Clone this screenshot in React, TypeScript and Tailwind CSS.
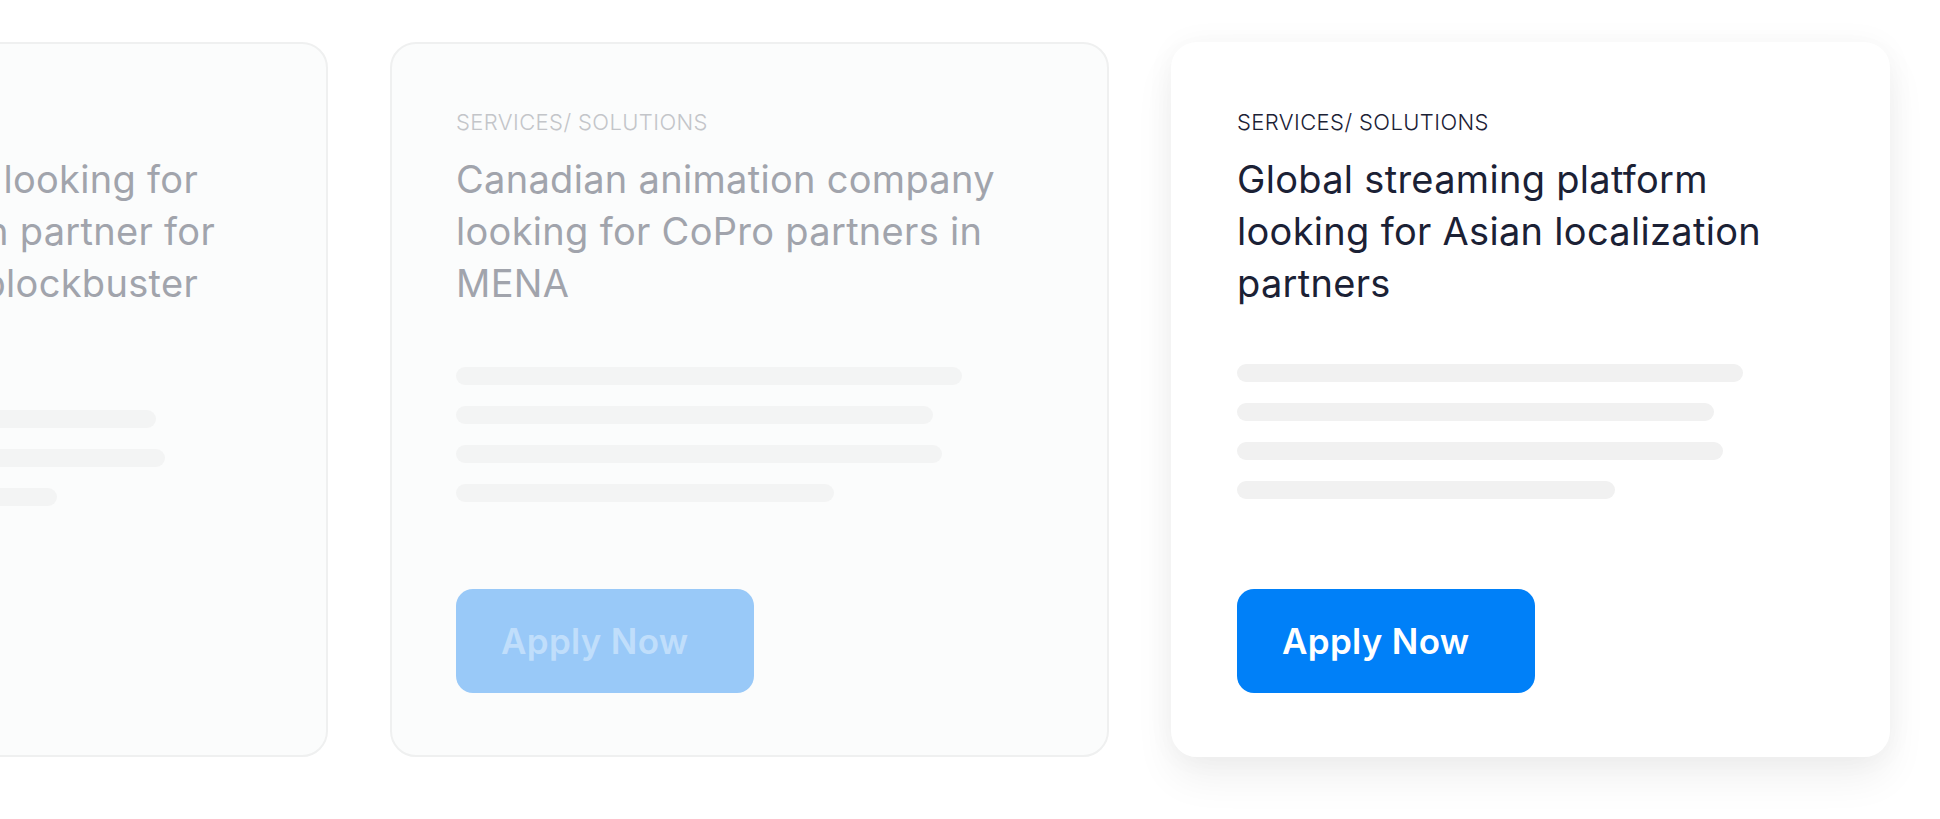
import React from 'react';

type CardProps = {
  title: React.ReactNode;
  bars: number[];
  active?: boolean;
  barsTop?: string;
};

function OpportunityCard({ title, bars, active = false, barsTop = 'mt-[55px]' }: CardProps) {
  return (
    <div
      className={`flex h-[715px] w-[719px] shrink-0 flex-col rounded-[26px] border-2 px-[64px] pt-[62px] pb-[62px] ${
        active
          ? 'border-white bg-white shadow-[0_22px_40px_rgba(0,0,0,0.06),0_0_30px_rgba(0,0,0,0.04)]'
          : 'border-[#eff0f0] bg-[#fbfcfc]'
      }`}
    >
      <div
        className={`text-[22px] leading-[32px] font-light tracking-[0.4px] whitespace-nowrap ${
          active ? 'text-[#1b2135]' : 'text-[#c3c5c9]'
        }`}
      >
        SERVICES/ SOLUTIONS
      </div>
      <h3
        className={`mt-[15px] text-[38px] leading-[52px] font-normal tracking-[0.3px] whitespace-nowrap ${
          active ? 'text-[#1b2135]' : 'text-[#a1a4ac]'
        }`}
      >
        {title}
      </h3>

      {/* skeleton lines */}
      <div className={`${barsTop} flex flex-col gap-[21px]`}>
        {bars.map((w, i) => (
          <div
            key={i}
            className={`h-[18px] rounded-full ${active ? 'bg-[#f1f1f1]' : 'bg-[#f3f4f4]'}`}
            style={{ width: w }}
          />
        ))}
      </div>

      <button
        className={`mt-auto flex h-[104px] w-[298px] items-center rounded-[17px] pl-[45px] text-[35px] font-semibold tracking-[0.3px] ${
          active ? 'bg-[#0080f8] text-white' : 'bg-[#99c9f8] text-[#c0defb]'
        }`}
      >
        Apply Now
      </button>
    </div>
  );
}

export default function App() {
  return (
    <div
      className="h-[819px] w-[1940px] overflow-hidden bg-white"
      style={{ fontFamily: 'Inter, "Noto Sans", sans-serif' }}
    >
      <div className="ml-[-391px] flex gap-[62px] pt-[42px]">
        <OpportunityCard
          title={
            <>
              <div className="w-[523px] text-right">Hollywood studio looking for</div>
              <div className="w-[540px] text-right">a distribution partner for</div>
              <div className="w-[523px] text-right">their next blockbuster</div>
            </>
          }
          bars={[481, 490, 382]}
          barsTop="mt-[101px]"
        />
        <OpportunityCard
          title={
            <>
              Canadian animation company
              <br />
              looking for CoPro partners in
              <br />
              MENA
            </>
          }
          bars={[506, 477, 486, 378]}
          barsTop="mt-[58px]"
        />
        <OpportunityCard
          active
          title={
            <>
              Global streaming platform
              <br />
              looking for Asian localization
              <br />
              partners
            </>
          }
          bars={[506, 477, 486, 378]}
        />
      </div>
    </div>
  );
}
